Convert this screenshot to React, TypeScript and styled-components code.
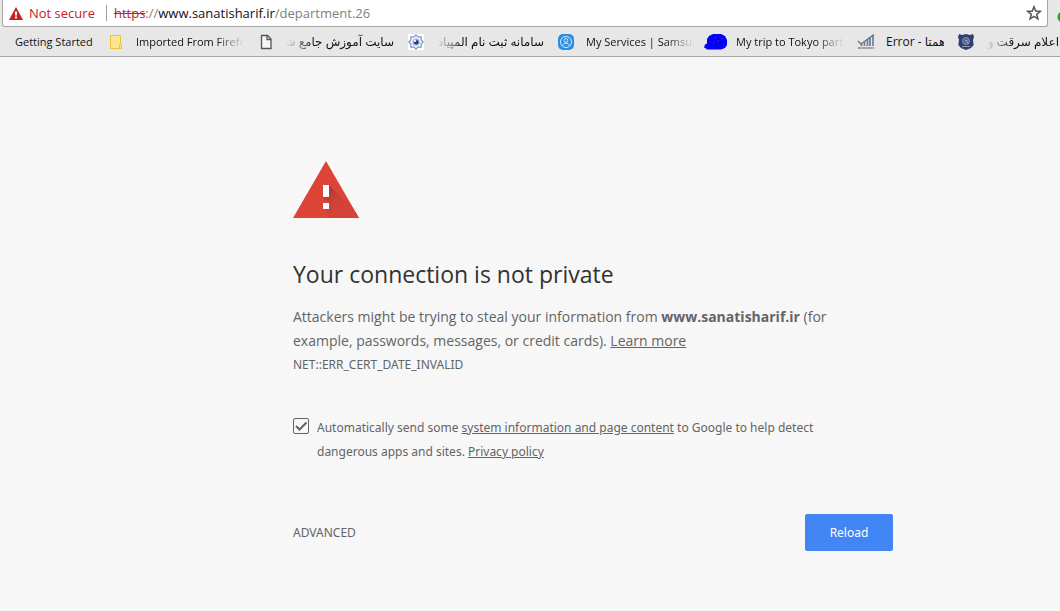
import React from "react";
import styled, { createGlobalStyle } from "styled-components";

const GlobalStyle = createGlobalStyle`
  * { box-sizing: border-box; }
  body {
    margin: 0;
    background: #f7f7f7;
    color: #646464;
    font-family: "Open Sans", "DejaVu Sans", sans-serif;
    overflow-x: hidden;
  }
`;

const Chrome = styled.header`
  background: #e7e7e7;
  border-bottom: 1px solid #a5a5a5;
`;

const Toolbar = styled.div`
  display: flex;
  padding-left: 2px;
  overflow: hidden;
`;

const AddressBar = styled.div`
  flex: 1;
  display: flex;
  align-items: center;
  height: 27px;
  padding: 0 5px 0 6px;
  background: #fff;
  border: 1px solid #a5a5a5;
  border-top: 0;
  border-radius: 0 0 3px 3px;
  font-size: 13px;
  line-height: 26px;
`;

const SecurityButton = styled.button`
  display: flex;
  align-items: center;
  gap: 6px;
  height: 16px;
  margin: 0 7px 0 0;
  padding: 0 11px 0 0;
  border: 0;
  border-right: 1px solid #a0a0a0;
  background: none;
  color: #c5221f;
  font: inherit;
`;

const Url = styled.div`
  flex: 1;
  white-space: nowrap;
  color: #808080;
  outline: none;
  b { color: #111; font-weight: 400; }
  s { color: #c5221f; }
`;

const StarButton = styled.button`
  display: flex;
  padding: 0;
  border: 0;
  background: none;
`;

const Extension = styled.div`
  width: 12px;
  height: 27px;
  padding: 7px 0 0 9px;
`;

const Bookmarks = styled.nav`
  display: flex;
  align-items: center;
  gap: 14px;
  height: 29px;
  padding-left: 15px;
  overflow: hidden;
`;

const Bookmark = styled.a`
  flex: none;
  display: flex;
  align-items: center;
  gap: 12px;
  color: #111;
  line-height: 20px;
  text-decoration: none;
  svg { flex: none; overflow: visible; }
`;

const Label = styled.span<{ $width: number; $persian?: boolean; $fade?: "left" | "right" }>`
  width: ${(p) => p.$width}px;
  overflow: hidden;
  white-space: nowrap;
  font-size: ${(p) => (p.$persian ? 12 : 11)}px;
  ${(p) =>
    p.$fade &&
    `mask-image: linear-gradient(to ${p.$fade}, #000 calc(100% - 28px), transparent);`}
`;

const Page = styled.main`
  display: flex;
  justify-content: center;
  padding: 104px 0 40px 126px;
`;

const Interstitial = styled.div`
  width: 600px;
`;

const Warning = styled.svg`
  display: block;
`;

const Title = styled.h1`
  margin: 39px 0 15px;
  color: #333;
  font-size: 23px;
  line-height: 32px;
  font-weight: 400;
`;

const Message = styled.p`
  margin: 0;
  padding-right: 32px;
  font-size: 14px;
  line-height: 24px;
`;

const ErrorCode = styled.div`
  font-family: "Noto Sans", sans-serif;
  font-size: 12px;
  line-height: 24px;
`;

const TextLink = styled.a`
  color: inherit;
`;

const OptIn = styled.label`
  display: flex;
  gap: 8px;
  margin-top: 39px;
  padding-right: 32px;
  font-family: "Noto Sans", sans-serif;
  font-size: 12px;
  line-height: 24px;
`;

const Tick = styled.input`
  appearance: none;
  flex: none;
  width: 16px;
  height: 16px;
  margin: 2px 0 0;
  border: 1px solid #646464;
  border-radius: 2px;
  &:not(:checked) + svg { display: none; }
`;

const TickBox = styled.span`
  position: relative;
  display: flex;
  flex: none;
  height: 24px;
  svg {
    position: absolute;
    top: 2px;
    left: 0;
    pointer-events: none;
  }
`;

const Actions = styled.div`
  display: flex;
  align-items: center;
  justify-content: space-between;
  margin-top: 50px;
`;

const AdvancedButton = styled.button`
  padding: 0;
  border: 0;
  background: none;
  color: #646464;
  font-family: "Noto Sans", sans-serif;
  font-size: 12px;
`;

const ReloadButton = styled.button`
  min-width: 88px;
  height: 37px;
  padding: 0 24px;
  border: 0;
  border-radius: 2px;
  background: #4285f4;
  color: #fff;
  font-family: "Noto Sans", sans-serif;
  font-size: 12px;
`;

const FolderIcon = () => (
  <svg width="16" height="16" viewBox="0 0 16 16">
    <path d="M2.5 1.5h10v9h1v4h-11z" fill="#ffe591" stroke="#e9c341" />
    <path d="M11.5 14v-3.5h1" fill="none" stroke="#e9c341" />
  </svg>
);

const PageIcon = () => (
  <svg width="16" height="16" viewBox="0 0 16 16">
    <path d="M3.5 1.5h6l3.500 3.500v9.500h-9.500z" fill="#f5f5f5" stroke="#555" strokeWidth="1.300" />
    <path d="M9 1.500v4h4" fill="none" stroke="#555" strokeWidth="1.300" />
  </svg>
);

const EmblemIcon = () => (
  <svg width="16" height="16" viewBox="0 0 16 16">
    <path d="M0 0h16v16H0z" fill="#fff" />
    <path
      d="M8 .8l2 2h3.200v3.200l2 2-2 2v3.200H10l-2 2-2-2H2.800V10l-2-2 2-2V2.800H6z"
      fill="#f1f5fc"
      stroke="#8197c6"
      strokeWidth="1.200"
    />
    <circle cx="8" cy="8" r="3.600" fill="#9daccc" />
    <circle cx="8.300" cy="8.200" r="2.300" fill="#253c80" />
    <circle cx="7" cy="6.700" r="1.300" fill="#edf2fc" />
  </svg>
);

const ProfileIcon = () => (
  <svg width="16" height="16" viewBox="0 0 16 16">
    <rect width="16" height="16" rx="5" fill="#2b8de3" />
    <g fill="none" stroke="#d5eafc">
      <circle cx="8" cy="8" r="5.500" />
      <circle cx="8" cy="6.500" r="1.900" />
      <path d="M4.500 11.800c.5-3.300 6.500-3.300 7 0" />
    </g>
  </svg>
);

const ScribbleIcon = () => (
  <svg width="16" height="16" viewBox="0 0 16 16">
    <path
      d="M-1 5L1 2l4-2h8l4 2 2 4v5l-2 3-4 1.500H-1l-1-1-2-1 1-3 2-1z"
      fill="#0202fa"
    />
    <path d="M7 4h1M10 7h1M14 4v1M5 9h1" stroke="#8a22b8" />
  </svg>
);

const SignalIcon = () => (
  <svg width="16" height="16" viewBox="0 0 16 16">
    <path d="M3.500 12V10M6.500 12V8M9.500 12V5M12 12V3M15 12V1" stroke="#73869a" strokeWidth="1.800" />
    <path d="M0 7l3 3L16 .5" fill="none" stroke="#596e83" strokeWidth="1.200" />
    <path d="M0 14h16" stroke="#8d98a2" strokeWidth="2" strokeDasharray="2 .5" />
  </svg>
);

const ShieldIcon = () => (
  <svg width="16" height="16" viewBox="0 0 16 16">
    <path d="M1 0l3 1 4-1 4 1 3-1 1 3-1 3 .7 5-2.700 3L8 16l-5-2L.3 11 1 6 0 3z" fill="#2e406f" />
    <circle cx="8" cy="7" r="3.500" fill="#56658f" stroke="#8490b5" />
    <path d="M7 6.500h2v2l2 1M4 12.500h8" fill="none" stroke="#a9b3cd" strokeWidth=".8" />
  </svg>
);

const bookmarks: {
  text: string;
  width: number;
  icon?: React.ReactNode;
  fade?: "left" | "right";
  persian?: boolean;
}[] = [
  { text: "Getting Started", width: 79 },
  { text: "Imported From Firefox", width: 108, icon: <FolderIcon />, fade: "right" },
  { text: "سایت آموزش جامع شریف", width: 108, icon: <PageIcon />, fade: "left", persian: true },
  { text: "سامانه ثبت نام المپیاد های", width: 108, icon: <EmblemIcon />, fade: "left", persian: true },
  { text: "My Services | Samsung", width: 108, icon: <ProfileIcon />, fade: "right" },
  { text: "My trip to Tokyo part", width: 108, icon: <ScribbleIcon />, fade: "right" },
  { text: "Error - همتا", width: 58, icon: <SignalIcon />, persian: true },
  { text: "اعلام سرقت و مفقودی", width: 73, icon: <ShieldIcon />, fade: "left", persian: true },
];

export default function App() {
  return (
    <>
      <GlobalStyle />
      <Chrome>
        <Toolbar>
          <AddressBar>
            <SecurityButton type="button">
              <svg width="14" height="13" viewBox="0 0 14 13">
                <path d="M7 0l7 13H0z" fill="#c5221f" />
                <path d="M6 4.500h2v4H6zM6 9.500h2v2H6z" fill="#fff" />
              </svg>
              Not secure
            </SecurityButton>
            <Url role="textbox" aria-label="Address" tabIndex={0}>
              <s>https</s>://<b>www.sanatisharif.ir</b>/department.26
            </Url>
            <StarButton type="button" aria-label="Bookmark this page">
              <svg width="16" height="16" viewBox="0 0 16 16">
                <path
                  d="M8 1.800l1.700 4.300 4.600.3-3.600 2.900 1.200 4.500L8 11.300l-3.900 2.500 1.200-4.500L1.700 6.400l4.600-.3z"
                  fill="none"
                  stroke="#555"
                  strokeWidth="1.500"
                />
              </svg>
            </StarButton>
          </AddressBar>
          <Extension>
            <svg width="12" height="12" viewBox="0 0 12 12">
              <circle cx="6" cy="5" r="5.500" fill="#10b010" />
            </svg>
          </Extension>
        </Toolbar>
        <Bookmarks aria-label="Bookmarks">
          {bookmarks.map((b) => (
            <Bookmark href="#" key={b.text}>
              {b.icon}
              <Label
                $width={b.width}
                $fade={b.fade}
                $persian={b.persian}
                dir={b.fade === "left" ? "rtl" : "ltr"}
              >
                {b.text}
              </Label>
            </Bookmark>
          ))}
        </Bookmarks>
      </Chrome>
      <Page>
        <Interstitial>
          <Warning width="66" height="58" viewBox="0 0 66 58">
            <defs>
              <linearGradient id="shade" gradientUnits="userSpaceOnUse" x1="33" y1="33" x2="48" y2="48">
                <stop offset="0" stopColor="#b5392d" />
                <stop offset=".5" stopColor="#cd4135" />
                <stop offset="1" stopColor="#d54236" />
              </linearGradient>
              <clipPath id="triangle">
                <path d="M33 0l33 57H0z" />
              </clipPath>
            </defs>
            <g clipPath="url(#triangle)">
              <path d="M0 0h66v57H0z" fill="#db4437" />
              <path d="M36 24l30 30v3H51L30 36h6z" fill="url(#shade)" />
              <path d="M36 42l15 15H39l-9-9h6z" fill="url(#shade)" />
            </g>
            <path d="M30 24h6v12h-6zM30 42h6v6h-6z" fill="#fff" />
          </Warning>
          <Title>Your connection is not private</Title>
          <Message>
            Attackers might be trying to steal your information from{" "}
            <strong>www.sanatisharif.ir</strong> (for example, passwords, messages, or credit
            cards). <TextLink href="#">Learn more</TextLink>
          </Message>
          <ErrorCode>NET::ERR_CERT_DATE_INVALID</ErrorCode>
          <OptIn>
            <TickBox>
              <Tick type="checkbox" defaultChecked />
              <svg width="16" height="16" viewBox="0 0 16 16">
                <path d="M3 8l3.500 3.500 7-7" fill="none" stroke="#646464" strokeWidth="2" />
              </svg>
            </TickBox>
            <span>
              Automatically send some{" "}
              <TextLink href="#">system information and page content</TextLink> to Google to help
              detect dangerous apps and sites. <TextLink href="#">Privacy policy</TextLink>
            </span>
          </OptIn>
          <Actions>
            <AdvancedButton type="button">ADVANCED</AdvancedButton>
            <ReloadButton type="button">Reload</ReloadButton>
          </Actions>
        </Interstitial>
      </Page>
    </>
  );
}
